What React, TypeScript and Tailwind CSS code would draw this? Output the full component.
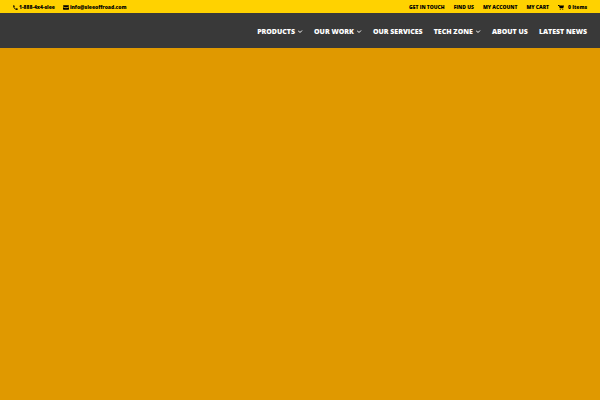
import React from 'react';

const contactLinks = [
  { label: '1-888-4x4-slee', href: 'tel:1-888-4x4-slee', icon: 'phone' },
  { label: 'info@sleeoffroad.com', href: 'mailto:info@sleeoffroad.com', icon: 'mail' },
];

const topLinks = ['GET IN TOUCH', 'FIND US', 'MY ACCOUNT', 'MY CART'];

const menuItems = [
  { label: 'PRODUCTS', hasMenu: true },
  { label: 'OUR WORK', hasMenu: true },
  { label: 'OUR SERVICES', hasMenu: false },
  { label: 'TECH ZONE', hasMenu: true },
  { label: 'ABOUT US', hasMenu: false },
  { label: 'LATEST NEWS', hasMenu: false },
];

const PhoneIcon = () => (
  <svg className="w-[5px] h-[5px]" viewBox="0 0 20 20" fill="currentColor" aria-hidden="true">
    <path d="M1 2C3 0 6 1 7 5c0 2-1 3-2 4 1 3 3 5 6 6 1-2 3-3 5-2 3 1 4 4 2 6-4 2-9 0-13-5C1 10 0 5 1 2z" />
  </svg>
);

const MailIcon = () => (
  <svg className="w-[6px] h-[5px]" viewBox="0 0 24 20" fill="currentColor" aria-hidden="true">
    <path d="M2 1h20l2 2v3l-12 4L0 6V3zM0 9l12 4 12-4v8l-2 2H2l-2-2z" />
  </svg>
);

const CartIcon = () => (
  <svg className="w-[6px] h-[5px]" viewBox="0 0 24 20" fill="currentColor" aria-hidden="true">
    <path d="M0 0h5l1 2h18l-3 11H7L4 4H0z" />
    <circle cx="9" cy="17" r="2" />
    <circle cx="19" cy="17" r="2" />
  </svg>
);

const ChevronIcon = () => (
  <svg className="w-[5px] h-[4px]" viewBox="0 0 10 8" fill="none" stroke="currentColor" strokeWidth="2" aria-hidden="true">
    <path d="M0 1l4 4 4-4" />
  </svg>
);

const App = () => {
  return (
    <div className="min-h-screen flex flex-col bg-[#e09900] font-['Open_Sans',sans-serif]">
      {/* Top bar */}
      <div className="flex justify-between px-[13px] pt-px h-[13px] bg-[#ffd200] text-black text-[5px] leading-3 font-extrabold whitespace-nowrap">
        <div className="flex gap-2">
          {contactLinks.map((item) => (
            <a key={item.label} href={item.href} className="flex items-center gap-px">
              {item.icon === 'phone' ? <PhoneIcon /> : <MailIcon />}
              <span>{item.label}</span>
            </a>
          ))}
        </div>
        <nav className="flex gap-[9px]" aria-label="Secondary">
          {topLinks.map((label) => (
            <a key={label} href="#">{label}</a>
          ))}
          <a href="#" className="flex items-center gap-1">
            <CartIcon />
            <span>0 Items</span>
          </a>
        </nav>
      </div>

      {/* Main header */}
      <header className="flex items-center justify-end h-[35px] px-[13px] pt-[2px] bg-[#393939] text-white">
        <nav className="flex gap-[11px] text-[7px] leading-3 font-extrabold whitespace-nowrap" aria-label="Main">
          {menuItems.map((item) => (
            <a key={item.label} href="#" className="flex items-center gap-[3px]">
              {item.label}
              {item.hasMenu && <ChevronIcon />}
            </a>
          ))}
        </nav>
      </header>

      <main className="flex-1" />
    </div>
  );
};

export default App;
